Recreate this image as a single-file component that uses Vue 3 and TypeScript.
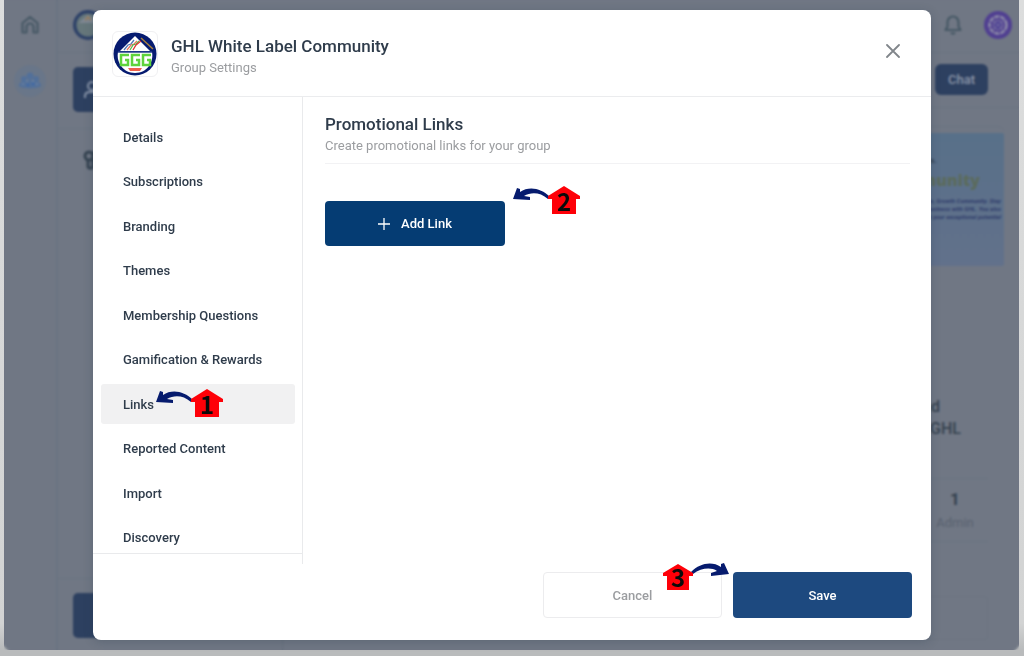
<script setup lang="ts">
import { ref } from 'vue'

const sections: string[] = [
  'Details',
  'Subscriptions',
  'Branding',
  'Themes',
  'Membership Questions',
  'Gamification & Rewards',
  'Links',
  'Reported Content',
  'Import',
  'Discovery',
]
const active = ref('Links')
</script>

<template>
  <div class="stage">
    <div class="window">
      <nav class="rail" aria-label="Main">
        <a href="#" class="rail-link" aria-label="Home">
          <svg width="20" height="20" viewBox="0 0 20 20" fill="none" stroke="#465865" stroke-width="2.200" stroke-linejoin="round">
            <path d="M2.500 8 10 2l7.500 6v9.500h-4V12a3.500 3.500 0 0 0-7 0v5.500h-4z" />
          </svg>
        </a>
        <a href="#" class="rail-link current" aria-label="Communities">
          <svg width="24" height="18" viewBox="0 0 24 18" fill="#52709a">
            <circle cx="12" cy="4" r="3.500" /><circle cx="6" cy="7" r="3" /><circle cx="18" cy="7" r="3" />
            <path d="M1 14c0-4 4-6 8-5 1-2 5-2 6 0 4-1 8 1 8 5-3 3-19 3-22 0z" />
            <g fill="#7085a0"><circle cx="9" cy="9" r="1" /><circle cx="15" cy="9" r="1" /><circle cx="5" cy="12" r="1" /><circle cx="19" cy="12" r="1" /></g>
            <g fill="#2f62b0"><circle cx="10" cy="13" r="1" /><circle cx="15" cy="12" r="1" /></g>
          </svg>
        </a>
      </nav>
      <div class="main">
        <header class="topbar">
          <svg class="group-logo" width="30" height="30" viewBox="0 0 44 44">
            <circle cx="22" cy="22" r="22" fill="#2d4168" />
            <circle cx="22" cy="22" r="17" fill="#66777b" />
            <path d="M8 19 22 7l14 12z" fill="#7f8793" />
            <path d="m18 15 4-5 4 5" stroke="#9b7d51" fill="none" stroke-width="2" />
          </svg>
          <div class="top-actions">
            <svg width="20" height="22" viewBox="0 0 20 22" fill="none" stroke="#465865" stroke-width="2.200" stroke-linejoin="round">
              <path d="M10 2.500a5.500 5.500 0 0 0-5.500 5.500v4.500L2.500 16h15l-2-3.500V8A5.500 5.500 0 0 0 10 2.500zM8 18.500c1 1.500 3 1.500 4 0" />
            </svg>
            <svg width="28" height="28" viewBox="0 0 28 28">
              <circle cx="14" cy="14" r="14" fill="#503f91" />
              <circle cx="14" cy="14" r="8.500" fill="none" stroke="#8d8ba8" stroke-width="2.500" stroke-dasharray="5 1" />
              <circle cx="14" cy="14" r="4.500" fill="#4b3e94" stroke="#77709f" stroke-width="2" stroke-dasharray="2 1" />
              <path d="m7 8 14 12M21 8 7 20" stroke="#7771a0" />
            </svg>
          </div>
        </header>
        <div class="columns">
          <aside class="side">
            <div class="side-top">
              <button type="button" class="side-button" aria-label="Members">
                <svg width="20" height="20" viewBox="0 0 20 20" fill="none" stroke="#8793a8" stroke-width="2">
                  <circle cx="9" cy="6" r="4" /><path d="M2 18v-2c0-3 2-4 5-4h4c3 0 5 1 5 4v2" />
                </svg>
              </button>
            </div>
            <svg class="channel" width="22" height="22" viewBox="0 0 22 22" fill="none" stroke="#354351" stroke-width="3">
              <circle cx="7" cy="7" r="4" /><path d="M6 11v6c0 3 5 3 5 0V4h7M11 11h7" />
            </svg>
            <div class="side-bottom">
              <button type="button" class="side-button" aria-label="Settings"></button>
            </div>
          </aside>
          <main class="feed">
            <div class="feed-top"><button type="button" class="chat">Chat</button></div>
            <section class="about">
              <div class="banner">
                <p class="kicker">Partners.</p>
                <p class="banner-title">Community</p>
                <p class="fine">Agency Partners, Growth Community. Stay<br />and grow your business with GHL. You also<br />reach your exceptional potential</p>
              </div>
              <p class="summary">White Label<span>and</span><br />with GHL</p>
              <div class="stats"><strong>1</strong><span>Admin</span></div>
              <div class="invite"></div>
            </section>
          </main>
        </div>
      </div>
    </div>

    <div class="overlay">
      <section class="dialog" role="dialog" aria-modal="true" aria-labelledby="dialog-title">
        <header class="dialog-head">
          <div class="logo">
            <svg width="44" height="44" viewBox="0 0 44 44">
              <circle cx="22" cy="22" r="21.500" fill="#061b70" />
              <path d="M5 20h34c2 10-5 21-17 21S3 30 5 20z" fill="#fff" />
              <path d="M7 19 22 4l15 15z" fill="#fff" />
              <path d="m28 6 12 11" stroke="#a9813c" stroke-width="1.500" />
              <g fill="none" stroke-width="1.300">
                <path d="m11 18 4-5 3-1 3-4" stroke="#5277b7" />
                <path d="m14 18 4-5 3-1 3-3" stroke="#e8755e" />
                <path d="m17 18 3-5 3-1 3-3" stroke="#55b949" />
                <path d="m20 18 3-5 5-4" stroke="#df3434" />
              </g>
              <path d="M5 20h34" stroke="#24408d" stroke-width="1.500" />
              <g fill="none" stroke="#5ed33d" stroke-width="2.500">
                <path d="M16 23H8v10h7v-5h-3M27 23h-8v10h7v-5h-3M38 23h-8v10h7v-5h-3" />
              </g>
              <path d="M15 36h14l-2 3H17z" fill="#ee5f4b" />
            </svg>
          </div>
          <div class="heading">
            <h1 id="dialog-title">GHL White Label Community</h1>
            <p>Group Settings</p>
          </div>
          <button type="button" class="close" aria-label="Close">
            <svg width="14" height="14" viewBox="0 0 14 14" fill="none" stroke="#81868b" stroke-width="1.800" stroke-linecap="round">
              <path d="m1 1 12 12M13 1 1 13" />
            </svg>
          </button>
        </header>

        <div class="dialog-body">
          <div class="menu">
            <nav class="menu-scroll" aria-label="Group settings">
              <div class="menu-list">
                <button
                  v-for="name in sections"
                  :key="name"
                  type="button"
                  class="menu-item"
                  :class="{ active: name === active }"
                  @click="active = name"
                >
                  {{ name }}
                  <svg v-if="name === 'Links'" class="marker marker-links" width="68" height="40" viewBox="0 -5 68 40">
                    <path class="arrow" d="M0 13 4 2l3 1v3C16 0 28 2 37 11l-2 2C27 6 18 6 11 10l6 1v3z" />
                    <path class="house" d="M51 0 67 10v3h-4v15H39V13h-4v-3z" />
                    <text x="51" y="25">1</text>
                  </svg>
                </button>
              </div>
            </nav>
          </div>

          <section class="content">
            <div class="content-head">
              <h2>Promotional Links</h2>
              <p>Create promotional links for your group</p>
            </div>
            <div class="add-wrap">
              <button type="button" class="add">
                <svg width="12" height="12" viewBox="0 0 12 12" stroke="#fff" stroke-width="1.300"><path d="M6 0v12M0 6h12" /></svg>
                Add Link
              </button>
              <svg class="marker marker-add" width="68" height="40" viewBox="0 -5 68 40">
                <path class="arrow" d="M0 13 4 2l3 1v3C16 0 28 2 37 11l-2 2C27 6 18 6 11 10l6 1v3z" />
                <path class="house" d="M51 0 67 10v3h-4v15H39V13h-4v-3z" />
                <text x="51" y="25">2</text>
              </svg>
            </div>
          </section>
        </div>

        <footer class="dialog-foot">
          <button type="button" class="cancel">Cancel</button>
          <button type="button" class="save">Save</button>
          <svg class="marker marker-save" width="68" height="40" viewBox="0 -5 68 40">
            <path class="arrow" d="M66 11 61 0l-3 1v3C49-2 37 0 28 9l2 2C38 5 48 4 54 8l-6 2v3z" />
            <path class="house" d="M15 1 30 10v3h-4v14H4V13H0v-3z" />
            <text x="15" y="24">3</text>
          </svg>
        </footer>
      </section>
    </div>
  </div>
</template>

<style>
body {
  background: #b9bbbc;
}
</style>

<style scoped>
* {
  box-sizing: border-box;
}
h1, h2, p {
  margin: 0;
}
button {
  font: inherit;
  padding: 0;
  border: 0;
  cursor: pointer;
}
.stage {
  position: relative;
  min-height: 100vh;
  padding: 0 5px 6px 4px;
  background: linear-gradient(#dcdddd 0, #d2d3d3 95%, #b9bbbc 99%);
  font-family: Roboto, "Liberation Sans", sans-serif;
  font-size: 13px;
  display: flex;
}
.window {
  flex: 1;
  display: flex;
  background: #707784;
  border-radius: 0 0 6px 6px;
  overflow: hidden;
}
.rail {
  width: 54px;
  border-right: 2px solid #6a7482;
  display: flex;
  flex-direction: column;
  align-items: center;
  padding-top: 9px;
  gap: 24px;
}
.rail-link {
  width: 32px;
  height: 32px;
  border-radius: 50%;
  display: grid;
  place-items: center;
}
.rail-link.current {
  background: #697689;
}
.main {
  flex: 1;
  min-width: 0;
  display: flex;
  flex-direction: column;
}
.topbar {
  height: 53px;
  border-bottom: 1px solid #6a7380;
  display: flex;
  align-items: center;
  justify-content: space-between;
  padding: 0 7px 3px 15px;
}
.top-actions {
  display: flex;
  align-items: center;
  gap: 21px;
}
.columns {
  flex: 1;
  display: flex;
}
.side {
  width: 225px;
  border-right: 1px solid #67717e;
  display: flex;
  flex-direction: column;
}
.side-top {
  padding: 14px 15px 16px;
  border-bottom: 1px solid #6a7380;
}
.side-button {
  width: 100%;
  height: 45px;
  padding-left: 10px;
  border-radius: 5px;
  background: #2d4060;
  display: flex;
  align-items: center;
}
.channel {
  margin: 20px 0 0 24px;
}
.side-bottom {
  margin-top: auto;
  padding: 14px 15px 12px;
  border-top: 1px solid #6a7380;
}
.feed {
  flex: 1;
  display: flex;
  flex-direction: column;
  align-items: stretch;
}
.feed-top {
  display: flex;
  justify-content: flex-end;
  padding: 11px 31px 12px;
  border-bottom: 1px solid #6a7380;
}
.chat {
  width: 53px;
  height: 31px;
  border-radius: 6px;
  background: #2d4060;
  color: #8d97aa;
  font-weight: 500;
}
.about {
  align-self: flex-end;
  width: 235px;
  margin: 18px 15px 0 0;
  padding-top: 6px;
  border-top: 1px solid #6a7380;
  border-radius: 6px;
  text-align: right;
  color: #35424f;
}
.banner {
  height: 133px;
  padding: 20px 3px 0;
  border-radius: 2px;
  background: linear-gradient(#587089, #62718b);
  font-weight: 700;
}
.kicker {
  padding-right: 64px;
  font-size: 8px;
  line-height: 16px;
}
.banner-title {
  padding-right: 21px;
  font-family: "Open Sans", sans-serif;
  font-size: 16px;
  line-height: 22px;
  font-weight: 800;
  color: #5b6b5c;
}
.fine {
  padding-top: 6px;
  font-size: 6px;
  line-height: 8px;
  font-style: italic;
  color: #2e3b6a;
  white-space: nowrap;
}
.summary {
  margin-top: 130px;
  padding-right: 43px;
  font-size: 16px;
  line-height: 22px;
  font-weight: 500;
}
.summary span {
  padding: 0 21px 0 4px;
}
.stats {
  margin: 38px 16px 0 0;
  padding: 8px 0 6px 153px;
  border: solid #6a7380;
  border-width: 1px 0;
  display: flex;
  flex-direction: column;
  align-items: center;
}
.stats strong {
  font-size: 17px;
  line-height: 24px;
}
.stats span {
  font-size: 13px;
  line-height: 24px;
  color: #58616f;
}
.invite {
  height: 44px;
  margin: 54px 16px 0 0;
  border: 1px solid #6c7582;
  border-radius: 4px;
}

.overlay {
  position: absolute;
  inset: 0 5px 6px 4px;
  padding: 10px 88px 10px 89px;
  backdrop-filter: blur(1px);
}
.dialog {
  background: #fff;
  border-radius: 8px;
  box-shadow: 0 2px 10px rgba(40, 60, 75, 0.25);
  color: #2f3c4b;
}
.dialog-head {
  display: flex;
  align-items: center;
  height: 87px;
  padding: 2px 30px 0 19px;
  border-bottom: 1px solid #ebecee;
}
.logo {
  width: 46px;
  height: 46px;
  border: 1px solid #f0f0f2;
  border-radius: 6px;
  display: grid;
  place-items: center;
}
.heading {
  flex: 1;
  padding: 4px 0 0 13px;
}
h1, h2 {
  font-size: 17px;
  line-height: 24px;
  font-weight: 500;
}
.heading p, .content-head p {
  color: #9b9da0;
  line-height: 20px;
}
.close {
  width: 16px;
  height: 16px;
  margin-bottom: 6px;
  background: none;
  display: grid;
  place-items: center;
}
.dialog-body {
  display: flex;
}
.menu {
  width: 210px;
  padding-bottom: 10px;
  border-right: 1px solid #e9eaec;
}
.menu-scroll {
  height: 457px;
  padding: 20px 7px 0 8px;
  border-bottom: 1px solid #e9eaec;
  overflow: hidden;
}
.menu-list {
  height: 441px;
  display: flex;
  flex-direction: column;
  justify-content: space-between;
}
.menu-item {
  position: relative;
  height: 40px;
  padding-left: 22px;
  border-radius: 3px;
  background: none;
  color: #2f3c4b;
  font-weight: 500;
  text-align: left;
  white-space: nowrap;
}
.menu-item.active {
  background: #f1f1f2;
}
.content {
  flex: 1;
  padding: 15px 21px 0 22px;
}
.content-head {
  padding-bottom: 7px;
  border-bottom: 1px solid #f2f2f4;
}
.add-wrap {
  position: relative;
  margin-top: 37px;
}
.add {
  width: 180px;
  height: 45px;
  border-radius: 4px;
  background: #053c73;
  color: #fff;
  font-weight: 500;
  display: flex;
  align-items: center;
  justify-content: center;
  gap: 11px;
}
.dialog-foot {
  position: relative;
  display: flex;
  justify-content: flex-end;
  gap: 11px;
  padding: 8px 19px 22px;
}
.cancel, .save {
  width: 179px;
  height: 46px;
  border-radius: 4px;
  font-weight: 500;
}
.cancel {
  border: 1px solid #ececee;
  background: #fff;
  color: #9b9da0;
}
.save {
  background: #1d497f;
  color: #fff;
}
.marker {
  position: absolute;
  overflow: visible;
  pointer-events: none;
}
.marker-links {
  left: 55px;
  top: 0;
}
.marker-add {
  left: 188px;
  top: -20px;
}
.marker-save {
  right: 200px;
  top: -6px;
}
.arrow {
  fill: #061b6e;
}
.house {
  fill: #fe0008;
}
.marker text {
  font-family: "Noto Sans CJK JP", sans-serif;
  font-size: 24px;
  font-weight: 700;
  text-anchor: middle;
  fill: #0a0a0a;
}
</style>
